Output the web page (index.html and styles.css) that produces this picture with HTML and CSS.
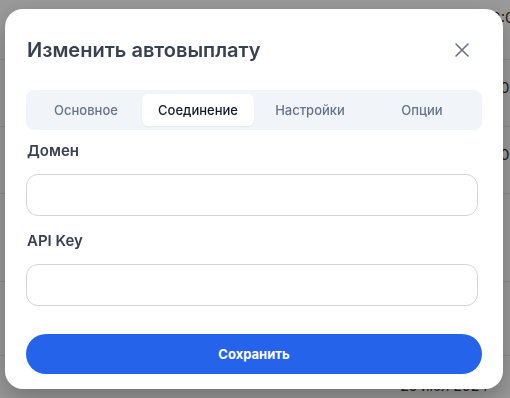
FILE: index.html
```html
<!DOCTYPE html>
<html lang="ru">
<head>
	<meta charset="UTF-8">
	<title>Изменить автовыплату</title>
	<link rel="stylesheet" href="styles.css">
</head>
<body>
	<div class="page">
		<div class="row row1"><span>12:00</span></div>
		<div class="row row2"><span>00</span></div>
		<div class="row row3"><span>00</span></div>
		<div class="row row4"></div>
		<div class="row row5"></div>
		<div class="row row6"><span class="date">25 июл 2024</span></div>
	</div>

	<div class="overlay">
		<div class="modal">
			<div class="modal-head">
				<h2 class="title">Изменить автовыплату</h2>
				<button class="close" type="button">
					<svg width="16" height="16" viewBox="0 0 16 16" fill="none" stroke="#6b7280" stroke-width="1.6" stroke-linecap="round">
						<path d="M2 2L14 14M14 2L2 14"/>
					</svg>
				</button>
			</div>
			<div class="tabs">
				<div class="tab">Основное</div>
				<div class="tab active">Соединение</div>
				<div class="tab">Настройки</div>
				<div class="tab">Опции</div>
			</div>
			<label class="label">Домен</label>
			<input class="field" type="text">
			<label class="label label2">API Key</label>
			<input class="field" type="text">
			<button class="save" type="button">Сохранить</button>
		</div>
	</div>
</body>
</html>
```

FILE: styles.css
```css
*{
	padding: 0;
	margin: 0;
	box-sizing: border-box;
}
body{
	font-family: Inter, "Noto Sans", sans-serif;
	background: #fff;
	overflow: hidden;
}
.page{
	width: 530px;
}
.row{
	border-bottom: 1px solid #e5e7eb;
	display: flex;
	justify-content: flex-end;
	font-size: 15px;
	color: #333;
}
.row1{ height: 60px; padding: 8px 6px 0 0; }
.row2{ height: 67px; padding: 18px 11px 0 0; }
.row3{ height: 67px; padding: 18px 11px 0 0; }
.row4{ height: 88px; }
.row5{ height: 74px; }
.row6{ height: 60px; border-bottom: none; padding: 21px 42px 0 0; }
.row6 .date{
	font-size: 14px;
}
.overlay{
	position: fixed;
	inset: 0;
	background: rgba(0,0,0,0.4);
	padding: 9px 7px 0 5px;
}
.modal{
	width: 498px;
	height: 380px;
	background: #fff;
	border-radius: 18px;
	box-shadow: 0 10px 25px rgba(0,0,0,0.25);
	padding: 21px 21px 15px 21px;
	display: flex;
	flex-direction: column;
}
.modal-head{
	height: 40px;
	display: flex;
	align-items: center;
	justify-content: space-between;
	padding-left: 1px;
}
.title{
	font-size: 20px;
	font-weight: 600;
	color: #374151;
}
.close{
	border: none;
	background: none;
	width: 16px;
	height: 16px;
	margin-right: 12px;
	display: flex;
}
.tabs{
	margin-top: 20px;
	height: 40px;
	background: #f1f5f9;
	border-radius: 8px;
	padding: 4px;
	display: grid;
	grid-template-columns: repeat(4, 1fr);
}
.tab{
	display: flex;
	align-items: center;
	justify-content: center;
	font-size: 13px;
	font-weight: 500;
	color: #64748b;
	border-radius: 6px;
}
.tab.active{
	background: #fff;
	color: #111827;
	box-shadow: 0 1px 2px rgba(0,0,0,0.05);
}
.label{
	margin-top: 11px;
	height: 20px;
	line-height: 20px;
	font-size: 15px;
	font-weight: 600;
	color: #374151;
	padding-left: 1px;
}
.label2{
	margin-top: 15px;
}
.field{
	margin-top: 13px;
	width: 452px;
	height: 42px;
	border: 1px solid #d1d5db;
	border-radius: 12px;
	background: #fff;
	outline: none;
}
.save{
	margin-top: 28px;
	height: 40px;
	border: none;
	border-radius: 20px;
	background: #2563eb;
	color: #fff;
	font-family: inherit;
	font-size: 13px;
	font-weight: 700;
}
```
